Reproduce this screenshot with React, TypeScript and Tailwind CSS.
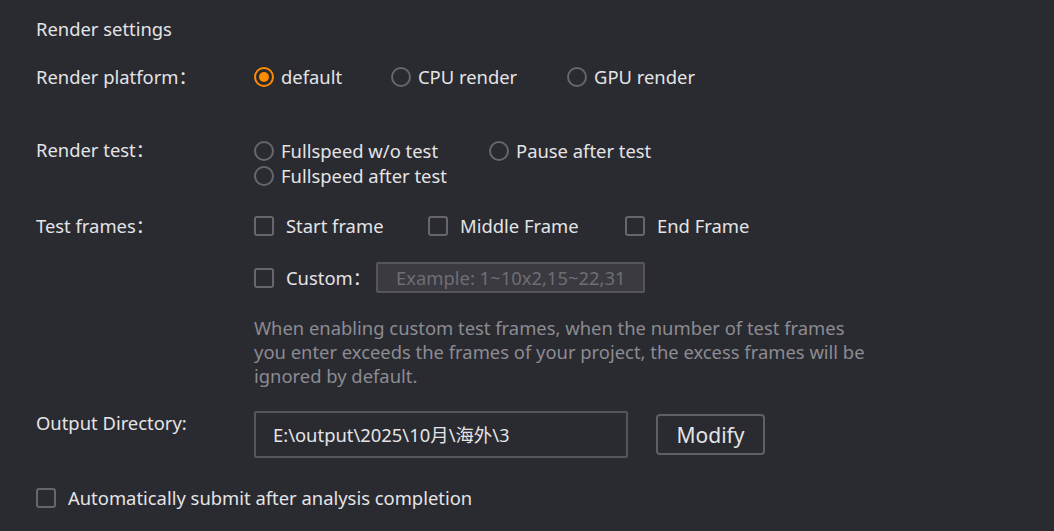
import { ReactNode } from 'react';

const font = { fontFamily: '"Noto Sans", "Noto Sans CJK SC", sans-serif' };

function Radio(props: { checked?: boolean; children: ReactNode; className?: string }) {
  return (
    <label className={`flex items-center gap-[7px] ${props.className ?? ''}`}>
      <span
        className={`flex h-[20px] w-[20px] shrink-0 items-center justify-center rounded-full border-2 ${
          props.checked ? 'border-[#ff8a00]' : 'border-[#66666c]'
        }`}
      >
        {props.checked ? <span className="h-[10px] w-[10px] rounded-full bg-[#ff8a00]" /> : null}
      </span>
      <span>{props.children}</span>
    </label>
  );
}

function Check(props: { children: ReactNode; className?: string }) {
  return (
    <label className={`flex items-center gap-[12px] ${props.className ?? ''}`}>
      <span className="h-[20px] w-[20px] shrink-0 rounded-[3px] border-2 border-[#66666c]" />
      <span>{props.children}</span>
    </label>
  );
}

function Row(props: { label: string; children: ReactNode; className?: string }) {
  return (
    <div className={`flex ${props.className ?? ''}`}>
      <div className="w-[218px] shrink-0">{props.label}</div>
      <div className="flex-1">{props.children}</div>
    </div>
  );
}

export default function App() {
  return (
    <div
      style={font}
      className="h-[531px] w-[1054px] overflow-hidden bg-[#2a2a31] px-[36px] pt-[17px] text-[18.4px] leading-[24px] text-[#e4e4e6]"
    >
      <div>Render settings</div>

      <Row label="Render platform：" className="mt-[24px]">
        <div className="flex">
          <Radio checked className="w-[137px]">default</Radio>
          <Radio className="w-[176px]">CPU render</Radio>
          <Radio>GPU render</Radio>
        </div>
      </Row>

      <Row label="Render test：" className="mt-[49px]">
        <div className="flex flex-col leading-[25px]">
          <div className="flex">
            <Radio className="w-[235px]">Fullspeed w/o test</Radio>
            <Radio>Pause after test</Radio>
          </div>
          <Radio>Fullspeed after test</Radio>
        </div>
      </Row>

      <Row label="Test frames：" className="mt-[26px]">
        <div className="flex">
          <Check className="w-[174px]">Start frame</Check>
          <Check className="w-[197px]">Middle Frame</Check>
          <Check>End Frame</Check>
        </div>
      </Row>

      <div className="ml-[218px] mt-[24px] flex items-center">
        <Check className="w-[122px]">Custom：</Check>
        <div className="flex h-[31px] w-[269px] items-center whitespace-nowrap rounded-[2px] border-2 border-[#55555b] bg-[#3a3a40] px-[18px] text-[#6e6e74]">
          Example: 1~10x2,15~22,31
        </div>
      </div>

      <div className="ml-[218px] mt-[23px] whitespace-nowrap text-[#8c8c92]">
        <div>When enabling custom test frames, when the number of test frames</div>
        <div>you enter exceeds the frames of your project, the excess frames will be</div>
        <div>ignored by default.</div>
      </div>

      <Row label="Output Directory:" className="mt-[23px]">
        <div className="flex items-start">
          <div className="flex h-[47px] w-[374px] items-center rounded-[2px] border-2 border-[#55555b] px-[17px]">
            E:\output\2025\10月\海外\3
          </div>
          <button
            type="button"
            className="ml-[28px] mt-[3px] flex h-[41px] w-[109px] items-center justify-center rounded-[4px] border-2 border-[#5f5f65] text-[21px] text-[#e4e4e6]"
          >
            Modify
          </button>
        </div>
      </Row>

      <Check className="mt-[28px]">Automatically submit after analysis completion</Check>
    </div>
  );
}
